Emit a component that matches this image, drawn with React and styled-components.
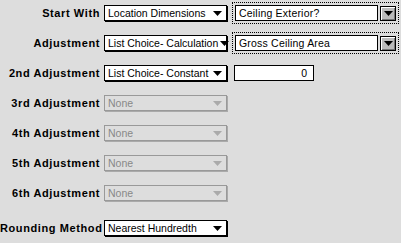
import React from "react";
import styled, { createGlobalStyle } from "styled-components";

const GlobalStyle = createGlobalStyle`
  body {
    margin: 0;
    background: #dddddd;
  }
`;

const rows = [
  { label: "Start With", value: "Location Dimensions", extra: { kind: "combo", value: "Ceiling Exterior?" } },
  { label: "Adjustment", value: "List Choice- Calculation", extra: { kind: "combo", value: "Gross Ceiling Area" } },
  { label: "2nd Adjustment", value: "List Choice- Constant", extra: { kind: "number", value: "0" } },
  { label: "3rd Adjustment", value: "None", disabled: true },
  { label: "4th Adjustment", value: "None", disabled: true },
  { label: "5th Adjustment", value: "None", disabled: true },
  { label: "6th Adjustment", value: "None", disabled: true },
  { label: "Rounding Method", value: "Nearest Hundredth", last: true },
];

const Arrow = ({ color }) => (
  <svg width="9" height="5" viewBox="0 0 9 5">
    <path d="M0 0H9L4.5 5Z" fill={color} />
  </svg>
);

const App = () => {
  return (
    <>
      <GlobalStyle />
      <Panel>
        {rows.map((row) => (
          <Row key={row.label} $last={row.last}>
            <Label>{row.label}</Label>
            <Popup $disabled={row.disabled}>
              <PopupText>{row.value}</PopupText>
              <Arrow color={row.disabled ? "#aaaaaa" : "#000"} />
            </Popup>
            {row.extra && row.extra.kind === "combo" && (
              <FocusRing>
                <ComboField>{row.extra.value}</ComboField>
                <ComboButton>
                  <Arrow color="#000" />
                </ComboButton>
              </FocusRing>
            )}
            {row.extra && row.extra.kind === "number" && (
              <NumberField>{row.extra.value}</NumberField>
            )}
          </Row>
        ))}
      </Panel>
    </>
  );
};

const Panel = styled.div`
  display: flex;
  flex-direction: column;
  padding-top: 5px;
  gap: 14px;
  width: 401px;
  height: 243px;
  box-sizing: border-box;
  font-family: "Liberation Sans", Arial, sans-serif;
`;

const Row = styled.div`
  display: flex;
  align-items: center;
  height: 16px;
  margin-top: ${(p) => (p.$last ? "5px" : "0")};
`;

const Label = styled.div`
  width: 100px;
  margin-right: 4px;
  text-align: right;
  font-weight: bold;
  font-size: 11px;
  letter-spacing: 0.6px;
  color: #000;
  white-space: nowrap;
`;

const Popup = styled.div`
  display: flex;
  align-items: center;
  justify-content: space-between;
  gap: 2px;
  box-sizing: border-box;
  width: 123px;
  height: 16px;
  padding: 0 4px 0 3px;
  background: ${(p) => (p.$disabled ? "#dddddd" : "#ffffff")};
  border: 1px solid ${(p) => (p.$disabled ? "#999999" : "#000")};
  box-shadow: 1px 1px 0 ${(p) => (p.$disabled ? "#aaaaaa" : "#000")};
  color: ${(p) => (p.$disabled ? "#888888" : "#000")};

  svg {
    display: block;
    flex: none;
  }
`;

const PopupText = styled.span`
  font-size: 10.5px;
  white-space: nowrap;
`;

const FocusRing = styled.div`
  display: flex;
  align-items: center;
  gap: 2px;
  margin-left: 5px;
  padding: 2px;
  border: 1px dotted #000;
`;

const ComboField = styled.div`
  box-sizing: border-box;
  width: 143px;
  height: 16px;
  padding: 0 3px;
  background: #fff;
  border: 1px solid #000;
  font-size: 10.5px;
  line-height: 14px;
  letter-spacing: 0.2px;
  color: #000;
`;

const ComboButton = styled.div`
  display: flex;
  align-items: center;
  justify-content: center;
  box-sizing: border-box;
  width: 16px;
  height: 15px;
  background: #bbbbbb;
  border: 1px solid #000;
  box-shadow: inset 1px 1px 0 #fff, inset -1px -1px 0 #777;

  svg {
    display: block;
  }
`;

const NumberField = styled.div`
  box-sizing: border-box;
  width: 80px;
  height: 16px;
  margin-left: 7px;
  padding: 0 6px;
  background: #fff;
  border: 1px solid #000;
  font-size: 10.5px;
  line-height: 14px;
  text-align: right;
  color: #000;
`;

export default App;
